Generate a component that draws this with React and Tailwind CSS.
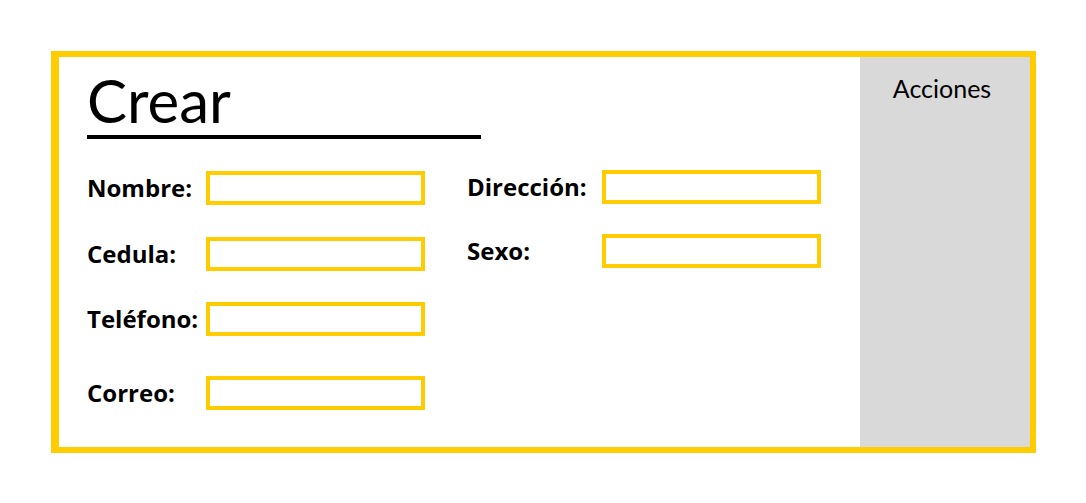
export default function App() {
  const label = "font-['Open_Sans',sans-serif] font-bold text-[24px] leading-none text-black";
  const box = "w-[219px] h-[34px] border-4 border-[#ffcc00] bg-white";
  return (
    <div className="w-[1086px] h-[503px] bg-white pt-[51px] pl-[51px]">
      <div className="w-[985px] h-[402px] border-[6px] border-l-8 border-[#ffcc00] flex">
        <div className="flex-1 bg-white pl-[28px] pt-[13px]">
          <div className="font-['Lato',sans-serif] text-[60px] leading-none text-black">Crear</div>
          <div className="mt-[5px] w-[394px] h-[4px] bg-black" />
          <div className="flex">
            <div className="w-[380px] flex flex-col">
              <div className="mt-[32px] flex items-center">
                <div className={`w-[119px] ${label}`}>Nombre:</div>
                <div className={box} />
              </div>
              <div className="mt-[32px] flex items-center">
                <div className={`w-[119px] ${label}`}>Cedula:</div>
                <div className={box} />
              </div>
              <div className="mt-[31px] flex items-center">
                <div className={`w-[119px] ${label}`}>Teléfono:</div>
                <div className={box} />
              </div>
              <div className="mt-[40px] flex items-center">
                <div className={`w-[119px] ${label}`}>Correo:</div>
                <div className={box} />
              </div>
            </div>
            <div className="flex flex-col">
              <div className="mt-[31px] flex items-center">
                <div className={`w-[135px] ${label}`}>Dirección:</div>
                <div className={box} />
              </div>
              <div className="mt-[30px] flex items-center">
                <div className={`w-[135px] ${label}`}>Sexo:</div>
                <div className={box} />
              </div>
            </div>
          </div>
        </div>
        <div className="w-[170px] bg-[#d9d9d9] pt-[16px] pr-[6px] text-center font-['Lato',sans-serif] text-[25px] leading-[1.2] text-black">
          Acciones
        </div>
      </div>
    </div>
  );
}
